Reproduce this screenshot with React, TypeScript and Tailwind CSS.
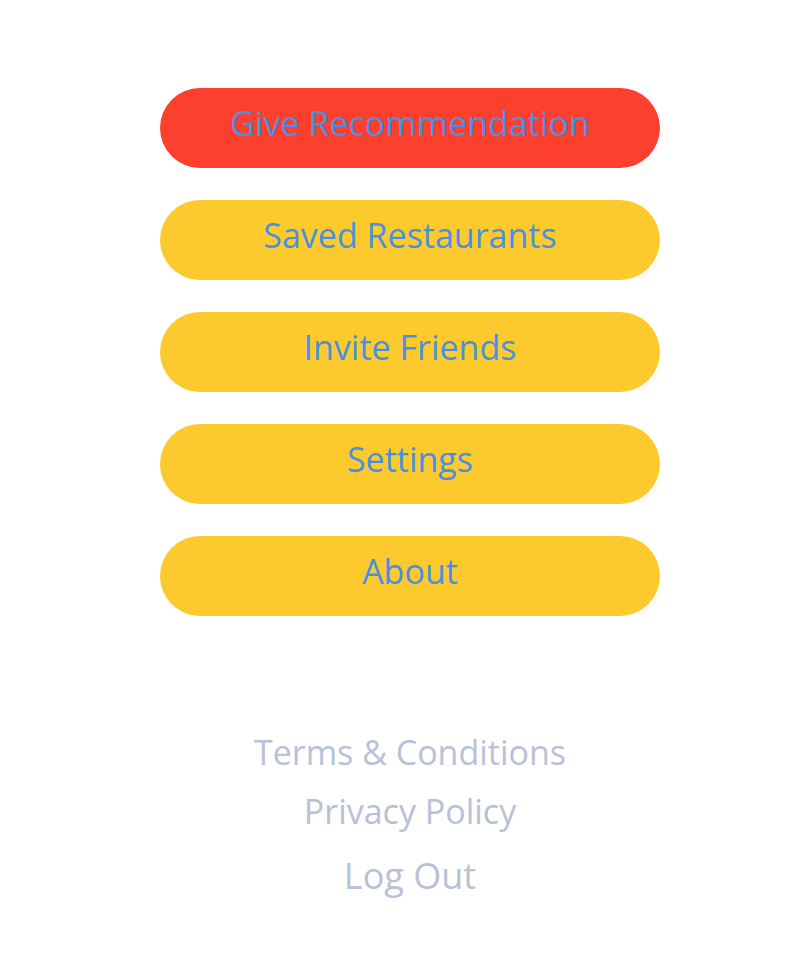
import React from "react";

const items = [
  { label: "Give Recommendation", active: true },
  { label: "Saved Restaurants" },
  { label: "Invite Friends" },
  { label: "Settings" },
  { label: "About" },
];

export default function App() {
  return (
    <div
      className="w-[800px] h-[976px] bg-white flex flex-col items-center pl-[20px]"
      style={{ fontFamily: '"Open Sans", "Liberation Sans", sans-serif' }}
    >
      <div className="mt-[88px] flex flex-col gap-[32px]">
        {items.map((it) => (
          <button
            key={it.label}
            className={`w-[500px] h-[80px] rounded-full flex items-center justify-center pb-[10px] text-[34px] text-[#4a90e2] ${
              it.active ? "bg-[#fd3f2e]" : "bg-[#fdca2d]"
            }`}
          >
            {it.label}
          </button>
        ))}
      </div>
      <div className="mt-[107px] flex flex-col items-center text-[#b8c1d6]">
        <div className="text-[34px] leading-[59px]">Terms &amp; Conditions</div>
        <div className="text-[34px] leading-[59px]">Privacy Policy</div>
        <div className="text-[36px] leading-[70px]">Log Out</div>
      </div>
    </div>
  );
}
